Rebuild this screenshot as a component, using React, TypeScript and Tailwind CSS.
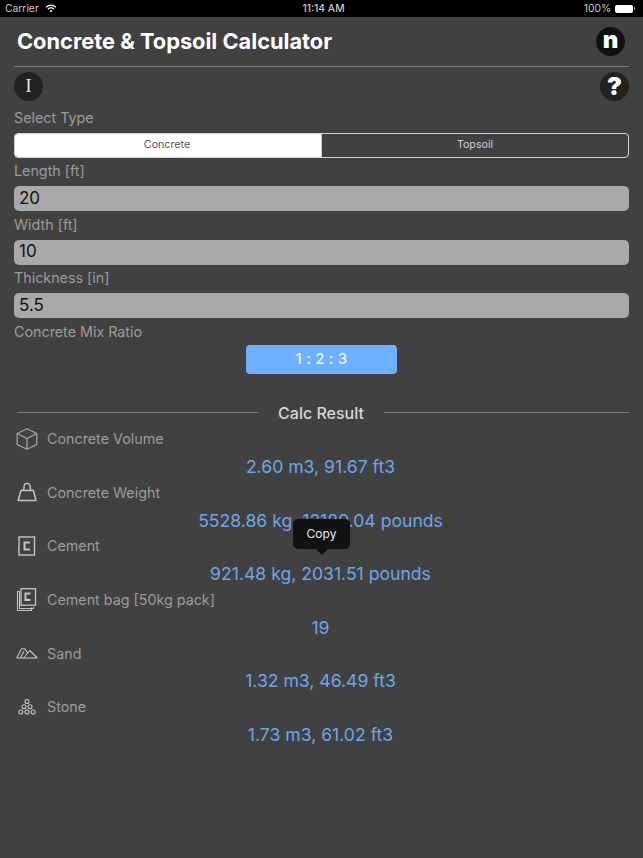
const font = { fontFamily: 'Inter, "Liberation Sans", sans-serif' };

function CubeIcon() {
  return (
    <svg width="22" height="22" viewBox="0 0 22 22" fill="none" stroke="#a8a8a8" strokeWidth="1.200" strokeLinejoin="round">
      <path d="M11 .8 20.800 5.500v11L11 21.200 1.200 16.500v-11z" />
      <path d="M1.200 5.500 11 10.500 20.800 5.500M11 10.500v10.700" />
    </svg>
  );
}

function WeightIcon() {
  return (
    <svg width="22" height="22" viewBox="0 0 22 22" fill="none" stroke="#c4c4c4" strokeWidth="1.500" strokeLinejoin="round">
      <path d="M5 9.500h12.400l2.600 10H2.200z" />
      <path d="M7.600 9.500 8.200 4.500q.3-2 2-2h1.800q1.700 0 2 2l.6 5" />
    </svg>
  );
}

function CementIcon() {
  return (
    <svg width="22" height="22" viewBox="0 0 22 22" fill="none" stroke="#c4c4c4">
      <rect x="3" y="2" width="15.500" height="18" strokeWidth="1.400" />
      <path d="M14 7.500H8.500v7H14" strokeWidth="2" />
    </svg>
  );
}

function BagIcon() {
  return (
    <svg width="22" height="24" viewBox="0 0 22 24" fill="none" stroke="#c4c4c4">
      <rect x="5" y=".7" width="14.500" height="16.500" strokeWidth="1.300" />
      <path d="M14.500 5.500H9.500v6.500h5" strokeWidth="2" />
      <path d="M3.500 3.500H1.500v19h14v-3" strokeWidth="1.100" />
      <path d="M3.500 3.500v17h14v-1.500" strokeWidth="1.100" />
    </svg>
  );
}

function SandIcon() {
  return (
    <svg width="22" height="12" viewBox="0 0 22 12" fill="none" stroke="#c4c4c4" strokeWidth="1.100" strokeLinejoin="round">
      <path d="M.8 11H21.200" />
      <path d="M.8 11 5.500 1.800H9L11.500 6" />
      <path d="M7.500 11 13.800 3.500 21.200 11" />
      <path d="M4.500 11 8 4" />
    </svg>
  );
}

function StoneIcon() {
  return (
    <svg width="18" height="16" viewBox="0 0 18 16" fill="none" stroke="#c4c4c4" strokeWidth="1.100">
      <circle cx="9" cy="2.500" r="2" />
      <circle cx="6" cy="7.800" r="2" />
      <circle cx="12" cy="7.800" r="2" />
      <circle cx="2.800" cy="13" r="2" />
      <circle cx="9" cy="13" r="2" />
      <circle cx="15.200" cy="13" r="2" />
    </svg>
  );
}

function Field({ label, value }: { label: string; value: string }) {
  return (
    <div>
      <div className="flex h-[28.33px] items-center pb-[2px] text-[14.3px] text-[#9c9c9c]">{label}</div>
      <div className="flex h-[25px] items-center rounded-[5px] bg-[#a9a9a9] px-[5px] text-[17px] text-[#111111]">{value}</div>
    </div>
  );
}

function ResultRow({ icon, label, value }: { icon: React.ReactNode; label: string; value: string }) {
  return (
    <div>
      <div className="flex h-[26.8px] items-center pb-[3px]">
        <div className="flex w-[33px] shrink-0 items-center justify-center pr-[8px]">{icon}</div>
        <div className="text-[14.3px] text-[#9c9c9c]">{label}</div>
      </div>
      <div className="flex h-[26.8px] items-center justify-center pr-[2px] text-[17.6px] text-[#6ea6e6]">{value}</div>
    </div>
  );
}

export default function App() {
  return (
    <div className="h-[858px] w-[643px] overflow-hidden bg-[#414141]" style={font}>
      {/* status bar */}
      <div className="relative flex h-[17px] items-center justify-between bg-black pr-[8px] pl-[5px] text-[10.3px] text-[#c8c8c8]">
        <div className="flex items-center gap-[6px]">
          <span>Carrier</span>
          <svg width="12" height="9" viewBox="0 0 13 10" fill="none" stroke="#e4e4e4" strokeWidth="1.500">
            <path d="M1 3.500c3-2.800 8-2.800 11 0M3 5.700c2-1.700 5-1.700 7 0" />
            <circle cx="6.500" cy="8" r="1.200" fill="#e4e4e4" stroke="none" />
          </svg>
        </div>
        <span className="absolute left-[4px] right-0 text-center font-medium">11:14 AM</span>
        <div className="flex items-center gap-[4px]">
          <span>100%</span>
          <div className="flex h-[8px] w-[18px] rounded-[2px] bg-white" />
          <div className="-ml-[3px] h-[3px] w-[1px] bg-[#aaaaaa]" />
        </div>
      </div>

      {/* header */}
      <div className="mx-[14px] flex h-[50px] items-center justify-between border-b border-[#7d7d7d] pr-[4px] pl-[3px]">
        <h1 className="text-[21.8px] font-bold text-white">Concrete &amp; Topsoil Calculator</h1>
        <div className="flex h-[29px] w-[29px] items-center justify-center rounded-full bg-[#111111] pb-[3px] text-[24px] leading-none font-black text-white">
          n
        </div>
      </div>

      <div className="px-[14px]">
        <div className="flex h-[34px] items-end justify-between">
          <div className="flex h-[29px] w-[29px] items-center justify-center rounded-full bg-[#222222] text-[18px] text-[#e8e8e8]" style={{ fontFamily: '"Liberation Serif", serif' }}>
            I
          </div>
          <div className="flex h-[29px] w-[29px] items-center justify-center rounded-full bg-[#222222] text-[25px] leading-none font-black text-white">
            ?
          </div>
        </div>

        <div className="flex h-[32px] items-center pt-[2px] text-[14.3px] text-[#9c9c9c]">Select Type</div>
        <div className="flex h-[25px] overflow-hidden rounded-[4px] border border-[#d2d2d2] text-[10.7px]">
          <div className="flex w-[306px] items-center justify-center bg-white pr-[2px] text-[#555555]">Concrete</div>
          <div className="flex flex-1 items-center justify-center border-l border-[#d2d2d2] text-[#d0d0d0]">Topsoil</div>
        </div>

        <Field label="Length [ft]" value="20" />
        <Field label="Width [ft]" value="10" />
        <Field label="Thickness [in]" value="5.5" />

        <div className="flex h-[27px] items-center text-[14.3px] text-[#9c9c9c]">Concrete Mix Ratio</div>
        <div className="flex justify-center">
          <div className="flex h-[29px] w-[151px] items-center justify-center rounded-[4px] bg-[#6eb0ff] text-[15px] font-medium tracking-[0.2px] text-[#f0f0f0]">
            1 : 2 : 3
          </div>
        </div>

        <div className="mt-[26px] flex h-[26px] items-center">
          <div className="ml-[3px] h-px w-[241px] bg-[#7d7d7d]" />
          <div className="w-[126px] text-center text-[16px] font-medium text-[#d6d6d6]">Calc Result</div>
          <div className="h-px flex-1 bg-[#7d7d7d]" />
        </div>

        <div className="relative mt-[1px]">
          <ResultRow icon={<CubeIcon />} label="Concrete Volume" value="2.60 m3, 91.67 ft3" />
          <ResultRow icon={<WeightIcon />} label="Concrete Weight" value="5528.86 kg, 12189.04 pounds" />
          <ResultRow icon={<CementIcon />} label="Cement" value="921.48 kg, 2031.51 pounds" />
          <ResultRow icon={<BagIcon />} label="Cement bag [50kg pack]" value="19" />
          <ResultRow icon={<SandIcon />} label="Sand" value="1.32 m3, 46.49 ft3" />
          <ResultRow icon={<StoneIcon />} label="Stone" value="1.73 m3, 61.02 ft3" />

          {/* copy tooltip */}
          <div className="absolute left-[279px] top-[92px] flex flex-col items-center">
            <div className="flex h-[30px] w-[57px] items-center justify-center rounded-[5px] bg-[#111111] text-[12px] text-[#e8e8e8]">Copy</div>
            <div className="h-0 w-0 border-x-[6px] border-t-[6px] border-x-transparent border-t-[#111111]" />
          </div>
        </div>
      </div>
    </div>
  );
}
